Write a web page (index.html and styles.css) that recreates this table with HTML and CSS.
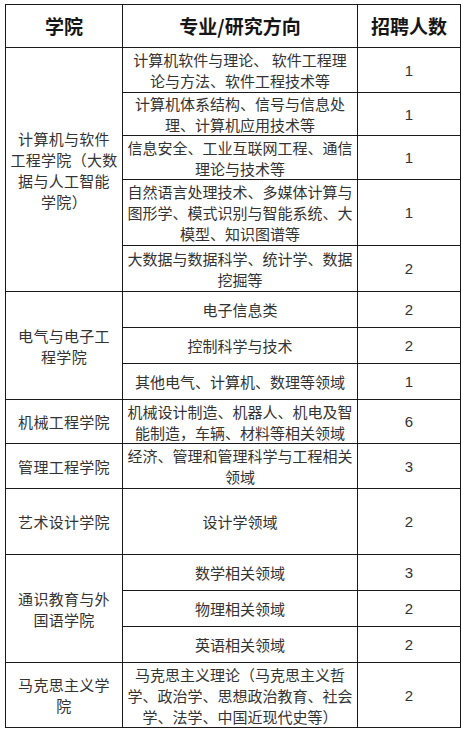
FILE: index.html
```html
<!DOCTYPE html>
<html lang="zh-CN">
<head>
<meta charset="utf-8">
<title>招聘计划</title>
<link rel="stylesheet" href="styles.css">
</head>
<body>
<div class="page">
<table class="plan">
  <colgroup>
    <col class="c-college">
    <col class="c-major">
    <col class="c-num">
  </colgroup>
  <thead>
    <tr class="r43">
      <th>学院</th>
      <th>专业/研究方向</th>
      <th>招聘人数</th>
    </tr>
  </thead>
  <tbody>
    <tr class="r45">
      <td class="college" rowspan="5">计算机与软件<br>工程学院（大数<br>据与人工智能<br>学院）</td>
      <td class="major">计算机软件与理论、 软件工程理<br>论与方法、软件工程技术等</td>
      <td class="num">1</td>
    </tr>
    <tr class="r43">
      <td class="major">计算机体系结构、信号与信息处<br>理、计算机应用技术等</td>
      <td class="num">1</td>
    </tr>
    <tr class="r44">
      <td class="major">信息安全、工业互联网工程、通信<br>理论与技术等</td>
      <td class="num">1</td>
    </tr>
    <tr class="r66">
      <td class="major">自然语言处理技术、多媒体计算与<br>图形学、模式识别与智能系统、大<br>模型、知识图谱等</td>
      <td class="num">1</td>
    </tr>
    <tr class="r46">
      <td class="major">大数据与数据科学、统计学、数据<br>挖掘等</td>
      <td class="num">2</td>
    </tr>
    <tr class="r36">
      <td class="college" rowspan="3">电气与电子工<br>程学院</td>
      <td class="major">电子信息类</td>
      <td class="num">2</td>
    </tr>
    <tr class="r36">
      <td class="major">控制科学与技术</td>
      <td class="num">2</td>
    </tr>
    <tr class="r36">
      <td class="major">其他电气、计算机、数理等领域</td>
      <td class="num">1</td>
    </tr>
    <tr class="r44">
      <td class="college">机械工程学院</td>
      <td class="major">机械设计制造、机器人、机电及智<br>能制造，车辆、材料等相关领域</td>
      <td class="num">6</td>
    </tr>
    <tr class="r45">
      <td class="college">管理工程学院</td>
      <td class="major">经济、管理和管理科学与工程相关<br>领域</td>
      <td class="num">3</td>
    </tr>
    <tr class="r66">
      <td class="college">艺术设计学院</td>
      <td class="major">设计学领域</td>
      <td class="num">2</td>
    </tr>
    <tr class="r36">
      <td class="college" rowspan="3">通识教育与外<br>国语学院</td>
      <td class="major">数学相关领域</td>
      <td class="num">3</td>
    </tr>
    <tr class="r36">
      <td class="major">物理相关领域</td>
      <td class="num">2</td>
    </tr>
    <tr class="r36">
      <td class="major">英语相关领域</td>
      <td class="num">2</td>
    </tr>
    <tr class="r65">
      <td class="college">马克思主义学<br>院</td>
      <td class="major">马克思主义理论（马克思主义哲<br>学、政治学、思想政治教育、社会<br>学、法学、中国近现代史等）</td>
      <td class="num">2</td>
    </tr>
  </tbody>
</table>
</div>
</body>
</html>
```

FILE: styles.css
```css
html, body {
  margin: 0;
  padding: 0;
  background: #ffffff;
}

.page {
  padding: 4px 0 0 5px;
}

.plan {
  border-collapse: separate;
  border-spacing: 0;
  table-layout: fixed;
  width: 456px;
  border-top: 1px solid #1a1a1a;
  border-left: 1px solid #1a1a1a;
  font-family: "Noto Sans CJK SC", "Noto Sans", sans-serif;
  font-size: 15px;
  line-height: 21px;
  color: #333333;
}

.c-college { width: 117px; }
.c-major { width: 235px; }
.c-num { width: 103px; }

.plan th,
.plan td {
  box-sizing: border-box;
  border-right: 1px solid #1a1a1a;
  border-bottom: 1px solid #1a1a1a;
  padding: 0;
  text-align: center;
  vertical-align: middle;
}

.plan th {
  font-size: 19px;
  font-weight: 700;
  color: #161616;
  line-height: 24px;
}

.college {
  letter-spacing: 0.3px;
}

.major {
  white-space: nowrap;
}

.num {
  font-family: "Liberation Sans", "Noto Sans", sans-serif;
  font-size: 15px;
  color: #333333;
}

.r36 { height: 36px; }
.r43 { height: 43px; }
.r44 { height: 44px; }
.r45 { height: 45px; }
.r46 { height: 46px; }
.r65 { height: 65px; }
.r66 { height: 66px; }
```
